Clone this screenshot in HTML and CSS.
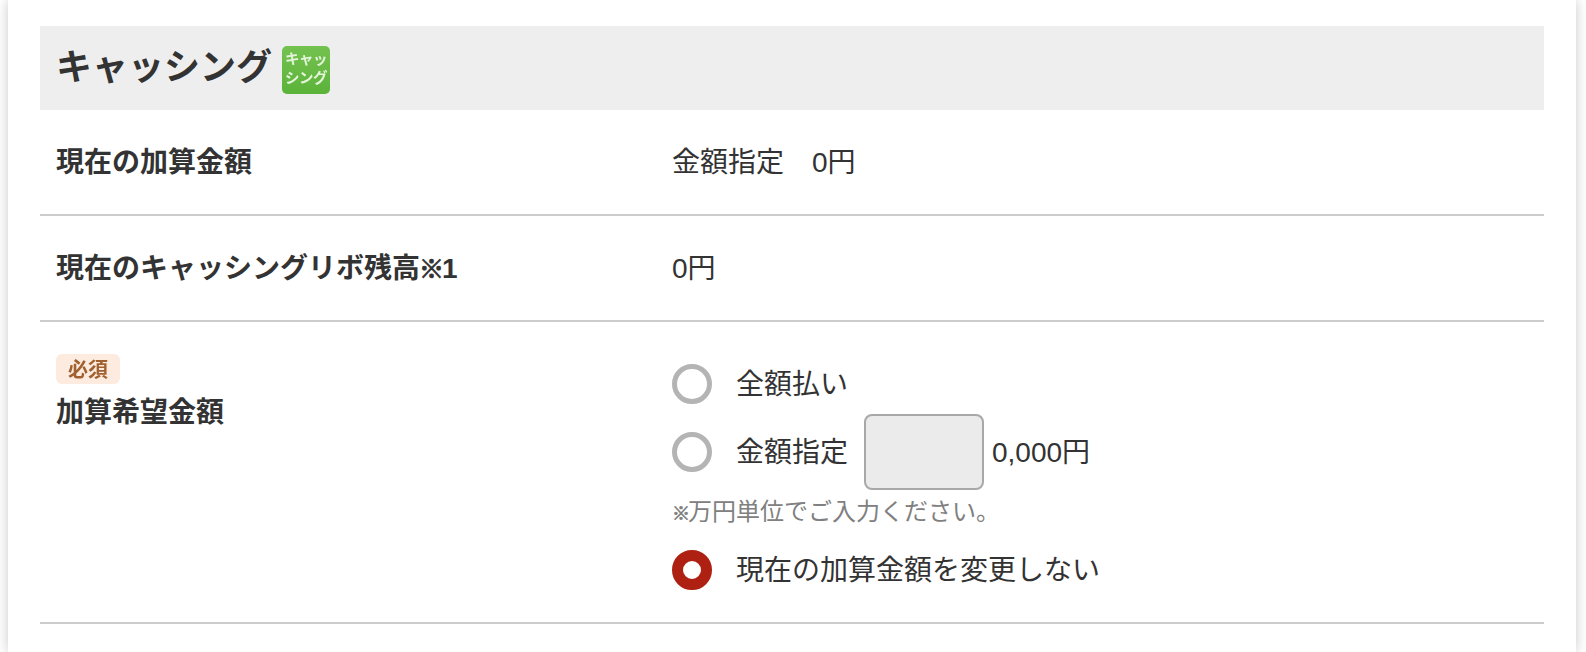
FILE: index.html
```html
<!DOCTYPE html>
<html lang="ja">
<head>
<meta charset="utf-8">
<title>キャッシング</title>
<link rel="stylesheet" href="styles.css">
</head>
<body>
<main class="card">
  <h2 class="section-head">
    <span>キャッシング</span>
    <span class="badge-icon"><span class="soft">キャッ<br>シング</span></span>
  </h2>
  <div class="row row-a">
    <div class="label">現在の加算金額</div>
    <div class="value">金額指定　0円</div>
  </div>
  <div class="row row-b">
    <div class="label">現在のキャッシングリボ残高<span class="mark">※</span>1</div>
    <div class="value">0円</div>
  </div>
  <div class="row row-c">
    <div class="label-col">
      <span class="required"><span class="soft">必須</span></span>
      <div class="label">加算希望金額</div>
    </div>
    <div class="options">
      <label class="option opt-1"><span class="radio"></span><span class="opt-text">全額払い</span></label>
      <label class="option opt-2"><span class="radio"></span><span class="opt-text">金額指定</span><span class="amount"></span><span class="opt-text">0,000円</span></label>
      <p class="note"><span class="note-mark">※</span>万円単位でご入力ください。</p>
      <label class="option opt-3"><span class="radio checked"></span><span class="opt-text">現在の加算金額を変更しない</span></label>
    </div>
  </div>
</main>
</body>
</html>
```
FILE: styles.css
```css
* { box-sizing: border-box; }
html, body { margin: 0; height: 100%; }
body {
  background: #fff;
  padding: 0 10px 0 8px;
  overflow: hidden;
  font-family: "Liberation Sans", "Noto Sans CJK JP", sans-serif;
  color: #333;
  font-size: 28px;
  line-height: 40px;
}
.card {
  background: #fff;
  height: 652px;
  padding: 26px 32px 0;
  box-shadow: 0 0 12px rgba(0, 0, 0, .22);
}
.section-head {
  display: flex;
  align-items: center;
  gap: 10px;
  height: 84px;
  margin: 0;
  padding-left: 16px;
  background: #eee;
  font-size: 36px;
  font-weight: 700;
}
.soft { display: block; filter: blur(.5px); }
.badge-icon {
  width: 48px;
  height: 48px;
  margin-top: 4px;
  border-radius: 5px;
  background: linear-gradient(#74c250, #5bb339);
  color: #e4f4db;
  font-size: 14.5px;
  line-height: 19px;
  font-weight: 700;
  text-align: center;
  padding-top: 4px;
  letter-spacing: -.5px;
  white-space: nowrap;
}
.row {
  display: grid;
  grid-template-columns: 616px 1fr;
  padding-left: 16px;
  border-bottom: 2px solid #ccc;
}
.row-a { height: 106px; align-items: center; padding-top: 2px; }
.row-b { height: 106px; align-items: center; padding-top: 2px; }
.row-c { height: 302px; padding-top: 32px; }
.label { font-weight: 700; color: #333; }
.value { color: #333; }
.mark {
  font-size: 25px;
  line-height: 0;
  font-weight: 700;
  margin-right: -2px;
  margin-left: -1px;
  -webkit-text-stroke: .9px #333;
}
.required {
  display: block;
  width: 64px;
  height: 30px;
  border-radius: 6px;
  background: #fdebdf;
  color: #a0602f;
  font-size: 20px;
  font-weight: 700;
  line-height: 33px;
  text-align: center;
}
.label-col .label { margin-top: 9px; }
.options { display: flex; flex-direction: column; padding-top: 10px; }
.option { display: flex; align-items: center; height: 40px; color: #333; }
.opt-2 { height: 76px; margin-top: 10px; }
.opt-text { margin-top: 2px; }
.radio {
  width: 40px;
  height: 40px;
  border-radius: 50%;
  border: 5px solid #b4b4b4;
  background: #fff;
  margin-right: 24px;
  flex: none;
}
.radio.checked { border: 11px solid #ae2112; }
.amount {
  width: 120px;
  height: 76px;
  margin-left: 16px;
  margin-right: 8px;
  background: #ebebeb;
  border: 2px solid #a8a8a8;
  border-radius: 8px;
}
.note {
  height: 36px;
  margin: 4px 0 20px;
  color: #808080;
  font-size: 24px;
  line-height: 36px;
}
.note-mark {
  display: inline-block;
  width: 16px;
  font-size: 18px;
  line-height: 0;
  font-weight: 700;
  -webkit-text-stroke: .7px #808080;
}
```
